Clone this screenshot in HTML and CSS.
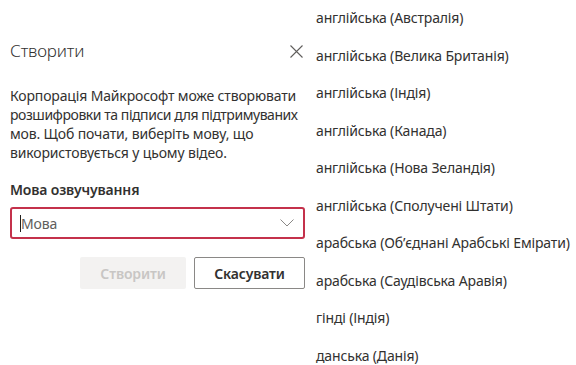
FILE: index.html
```html
<!DOCTYPE html>
<html lang="uk">
<head>
  <meta charset="UTF-8" />
  <title>Створити</title>
  <link rel="stylesheet" href="styles.css">
</head>
<body>

  <div class="panel">
    <div class="panel-head">
      <h2>Створити</h2>
      <button class="close" aria-label="Закрити">
        <svg width="13" height="13" viewBox="0 0 13 13"><path d="M0.5 0.5 L12.5 12.5 M12.5 0.5 L0.5 12.5" stroke="#605e5c" stroke-width="1.1" fill="none"/></svg>
      </button>
    </div>

    <p class="intro">Корпорація Майкрософт може створювати<br><span class="tight">розшифровки та підписи для підтримуваних</span><br>мов. Щоб почати, виберіть мову, що<br>використовується у цьому відео.</p>

    <label class="field-label">Мова озвучування</label>
    <div class="select">
      <span class="caret"></span>
      <span class="placeholder">Мова</span>
      <svg class="chevron" width="14" height="8" viewBox="0 0 14 8"><path d="M0.5 0.5 L7 7 L13.5 0.5" stroke="#8a8886" stroke-width="1" fill="none"/></svg>
    </div>

    <div class="actions">
      <button class="btn btn-primary" disabled>Створити</button>
      <button class="btn btn-default">Скасувати</button>
    </div>
  </div>

  <ul class="options">
    <li>англійська (Австралія)</li>
    <li>англійська (Велика Британія)</li>
    <li>англійська (Індія)</li>
    <li>англійська (Канада)</li>
    <li>англійська (Нова Зеландія)</li>
    <li>англійська (Сполучені Штати)</li>
    <li>арабська (Об’єднані Арабські Емірати)</li>
    <li>арабська (Саудівська Аравія)</li>
    <li>гінді (Індія)</li>
    <li>данська (Данія)</li>
  </ul>

</body>
</html>
```

FILE: styles.css
```css
:root {
  --text-color: #323130;
  --muted-color: #605e5c;
  --error-color: #c4314b;
}

* {
  box-sizing: border-box;
  margin: 0;
  padding: 0;
}

body {
  font-family: 'Noto Sans', 'Open Sans', sans-serif;
  font-size: 14px;
  letter-spacing: -0.15px;
  color: var(--text-color);
  background: #fff;
  display: flex;
  width: 576px;
  height: 365px;
  overflow: hidden;
}

.panel {
  width: 305px;
  flex: none;
  padding: 39px 0 0 10px;
}

.panel-head {
  display: flex;
  align-items: center;
  justify-content: space-between;
  height: 24px;
}

.panel-head h2 {
  font-size: 17px;
  font-weight: 300;
  line-height: 24px;
}

.close {
  border: none;
  background: none;
  width: 13px;
  height: 13px;
  margin-right: 2px;
  display: flex;
}

.intro {
  margin-top: 23px;
  line-height: 19px;
  white-space: nowrap;
}

.intro .tight {
  letter-spacing: -0.45px;
}

.field-label {
  display: block;
  margin-top: 18px;
  font-weight: 600;
  line-height: 20px;
}

.select {
  margin-top: 7px;
  height: 32px;
  border: 2px solid var(--error-color);
  border-radius: 3px;
  display: flex;
  align-items: center;
  padding: 0 9px 0 8px;
}

.caret {
  width: 1px;
  height: 17px;
  background: #201f1e;
}

.placeholder {
  flex: 1;
  color: var(--muted-color);
}

.actions {
  display: flex;
  justify-content: flex-end;
  gap: 8px;
  margin-top: 18px;
}

.btn {
  height: 32px;
  font-family: inherit;
  font-size: 14px;
  font-weight: 600;
  letter-spacing: inherit;
  border-radius: 2px;
}

.btn-primary {
  width: 106px;
  background: #f3f2f1;
  color: #c8c6c4;
  border: none;
}

.btn-default {
  width: 111px;
  background: #fff;
  color: var(--text-color);
  border: 1px solid #8a8886;
}

.options {
  list-style: none;
  flex: 1;
  margin-top: -1px;
  padding-left: 11px;
  background: #fff;
}

.options li {
  height: 37.5px;
  line-height: 37.5px;
  white-space: nowrap;
}
```
